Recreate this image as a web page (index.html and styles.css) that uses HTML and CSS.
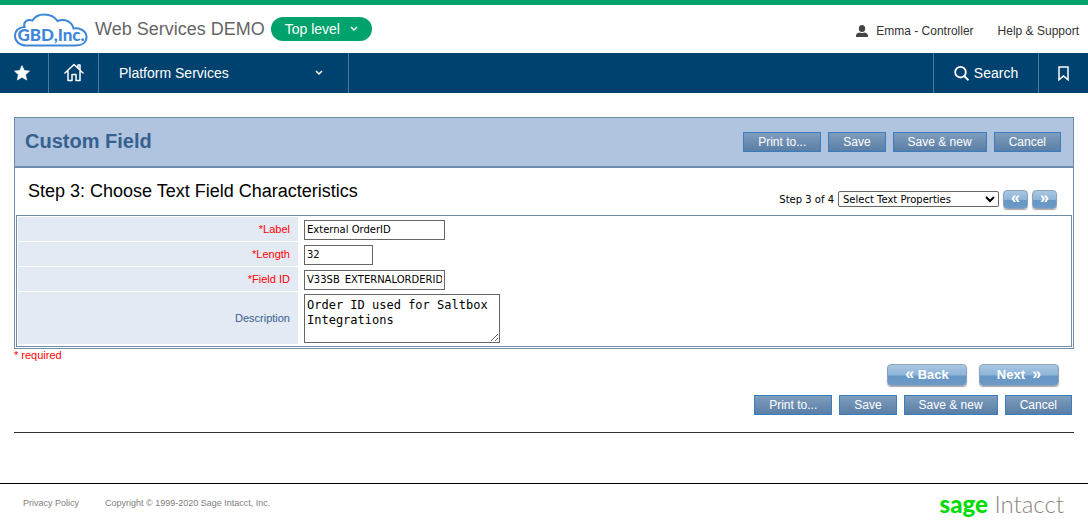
FILE: index.html
```
<!DOCTYPE html>
<html lang="en">
<head>
    <meta charset="UTF-8">
    <meta name="viewport" content="width=device-width, initial-scale=1.0">
    <title>Custom Field</title>
    <link rel="stylesheet" href="styles.css">
</head>
<body>
    <header class="top">
        <svg class="logo" width="76" height="36" viewBox="0 0 76 36" role="img" aria-label="GBD,Inc.">
            <path d="M14 32.5C6 32.500 2 28 2 23C2 17.500 6 14 11.500 14C10 9 14 6 19.500 7.500C22 3.500 26 1.500 31 1.500C37 1.500 42 4 44.500 8C52 5 59 9 60.500 15.500C68 14.500 73.500 18.500 73.500 24C73.500 29.500 69 32.500 63 32.500Z" fill="#fff" stroke="#3e87d8" stroke-width="2"/>
            <text x="38" y="28" text-anchor="middle" class="logo-text">GBD,Inc.</text>
        </svg>
        <span class="company">Web Services DEMO</span>
        <button class="level">Top level
            <svg width="8" height="6" viewBox="0 0 8 6"><path d="M1 1l3 3 3-3" fill="none" stroke="#fff" stroke-width="1.500"/></svg>
        </button>
        <div class="user-links">
            <a href="#" class="user">
                <svg width="12" height="12" viewBox="0 0 12 12" fill="#444"><ellipse cx="6" cy="3.500" rx="3.200" ry="3.500"/><path d="M0 12V10.500Q0 8.500 2.500 7.800L4 7.400Q6 8.500 8 7.400L9.500 7.800Q12 8.500 12 10.500V12Z"/></svg>
                Emma - Controller
            </a>
            <a href="#">Help &amp; Support</a>
        </div>
    </header>

    <nav class="menu">
        <a href="#" class="menu-star" aria-label="Favorites">
            <svg width="16" height="16" viewBox="0 0 16 16"><path d="M8 .5l2.300 5 5.200.6-3.900 3.600 1.100 5.300L8 12.300 3.300 15l1.100-5.300L.5 6.100l5.200-.6z" fill="#fff" stroke="#fff" stroke-width=".6" stroke-linejoin="round"/></svg>
        </a>
        <a href="#" class="menu-home" aria-label="Home">
            <svg width="20" height="20" viewBox="0 0 20 20" fill="none" stroke="#fff" stroke-width="1.500" stroke-linejoin="round" stroke-linecap="round"><path d="M1 10L10 1.500l9 8.500M14 5V2H16V7M4 8.500V17.500H8V11.500h4v6h4V8.500"/></svg>
        </a>
        <button class="menu-module">Platform Services
            <svg width="8" height="6" viewBox="0 0 8 6"><path d="M1 1l3 3 3-3" fill="none" stroke="#fff" stroke-width="1.500"/></svg>
        </button>
        <button class="menu-search">
            <svg width="15" height="15" viewBox="0 0 15 15" fill="none" stroke="#fff" stroke-width="1.800"><circle cx="6.500" cy="6.200" r="5.300"/><path d="M10.200 10L14.500 14.300"/></svg>
            Search
        </button>
        <button class="menu-bookmark" aria-label="Bookmark">
            <svg width="11" height="15" viewBox="0 0 11 15"><path d="M1 1h9v12.800L5.500 10 1 13.800z" fill="none" stroke="#fff" stroke-width="1.500"/></svg>
        </button>
    </nav>

    <main>
        <form>
            <section class="panel">
                <div class="panel-title">
                    <h1>Custom Field</h1>
                    <div class="actions">
                        <button type="button">Print to...</button>
                        <button type="button">Save</button>
                        <button type="button">Save &amp; new</button>
                        <button type="button">Cancel</button>
                    </div>
                </div>
                <div class="step">
                    <h2>Step 3: Choose Text Field Characteristics</h2>
                    <div class="step-nav">
                        <label for="stepSelect">Step 3 of 4</label>
                        <select id="stepSelect">
                            <option>Select Text Properties</option>
                        </select>
                        <button type="button" class="glossy" aria-label="Previous step">«</button>
                        <button type="button" class="glossy" aria-label="Next step">»</button>
                    </div>
                </div>
                <div class="fields">
                    <table>
                        <tr>
                            <th class="req"><label for="label">*Label</label></th>
                            <td><input type="text" id="label" value="External OrderID"></td>
                        </tr>
                        <tr>
                            <th class="req"><label for="length">*Length</label></th>
                            <td><input type="text" id="length" class="short" value="32"></td>
                        </tr>
                        <tr>
                            <th class="req"><label for="fieldId">*Field ID</label></th>
                            <td><input type="text" id="fieldId" value="V33SB_EXTERNALORDERID"></td>
                        </tr>
                        <tr>
                            <th><label for="description">Description</label></th>
                            <td><textarea id="description">Order ID used for Saltbox Integrations</textarea></td>
                        </tr>
                    </table>
                </div>
            </section>
            <p class="required">* required</p>
            <div class="wizard">
                <button type="button" class="glossy"><span class="arrow">«</span> Back</button>
                <button type="button" class="glossy">Next&nbsp; <span class="arrow">»</span></button>
            </div>
            <div class="actions actions-bottom">
                <button type="button">Print to...</button>
                <button type="button">Save</button>
                <button type="button">Save &amp; new</button>
                <button type="button">Cancel</button>
            </div>
        </form>
    </main>

    <footer>
        <a href="#">Privacy Policy</a>
        <span>Copyright © 1999-2020 Sage Intacct, Inc.</span>
        <div class="sage"><b>sage</b> Intacct</div>
    </footer>
</body>
</html>
```

FILE: styles.css
```
* {
    box-sizing: border-box;
}
body {
    margin: 0;
    background-color: #fff;
    font-family: "Liberation Sans", Arial, sans-serif;
    font-size: 12px;
}
button {
    font-family: inherit;
    cursor: pointer;
}
a {
    color: inherit;
    text-decoration: none;
}
h1, h2, p {
    margin: 0;
}

/* header */
.top {
    display: flex;
    align-items: center;
    height: 53px;
    padding: 4px 9px 0 13px;
    border-top: 5px solid #00a36c;
}
.logo-text {
    font-family: Lato, sans-serif;
    font-size: 17px;
    font-weight: 900;
    fill: #3e87d8;
}
.company {
    margin-left: 6px;
    padding-bottom: 4px;
    font-size: 18px;
    color: #666;
}
.level {
    display: flex;
    align-items: center;
    gap: 10px;
    height: 24px;
    margin: 0 0 4px 6px;
    padding: 0 14px;
    border: none;
    border-radius: 12px;
    background-color: #00a36c;
    color: #fff;
    font-size: 14px;
}
.user-links {
    display: flex;
    gap: 24px;
    margin-left: auto;
    font-size: 12px;
    color: #333;
}
.user {
    display: flex;
    align-items: center;
    gap: 8px;
}

/* main menu */
.menu {
    display: flex;
    height: 40px;
    background-color: #00426f;
}
.menu a, .menu button {
    display: flex;
    align-items: center;
    justify-content: center;
    padding: 0;
    border: 0 solid #4d7b9a;
    background: none;
    color: #fff;
    font-size: 14px;
}
.menu .menu-star {
    width: 49px;
    padding-right: 4px;
    border-right-width: 1px;
}
.menu .menu-home {
    width: 50px;
    border-right-width: 1px;
}
.menu .menu-module {
    width: 250px;
    padding: 0 25px 0 20px;
    border-right-width: 1px;
    justify-content: space-between;
}
.menu .menu-search {
    gap: 5px;
    width: 105px;
    margin-left: auto;
    border-left-width: 1px;
}
.menu .menu-bookmark {
    width: 50px;
    border-left-width: 1px;
}

/* form panel */
main {
    margin: 24px 14px 0;
    padding-bottom: 17px;
    border-bottom: 1px solid #333;
}
.panel {
    border: 1px solid #6f8caa;
}
.panel-title {
    display: flex;
    align-items: center;
    justify-content: space-between;
    height: 50px;
    padding: 0 12px 0 10px;
    border-bottom: 2px solid #6f8caa;
    background-color: #b0c4e0;
}
.panel-title h1 {
    padding-bottom: 2px;
    font-size: 20px;
    color: #36618f;
}
.actions {
    display: flex;
    gap: 7px;
}
.actions button {
    height: 20px;
    padding: 0 14px;
    border: 1px solid #3c7dc0;
    background: linear-gradient(#7f9dbd, #5a7ea6);
    color: #fff;
    font-size: 12px;
}
.step {
    display: flex;
    justify-content: space-between;
    height: 47px;
    padding: 13px 16px 0 13px;
}
.step h2 {
    font-size: 18px;
    font-weight: normal;
}
.step-nav {
    display: flex;
    align-items: center;
    gap: 4px;
    height: 36px;
    font-family: "DejaVu Sans", Verdana, sans-serif;
    font-size: 10px;
}
.step-nav select {
    width: 161px;
    height: 16px;
    padding: 0;
    border: 1px solid #666;
    border-radius: 2px;
    background-color: #fff;
    color: #000;
    font-family: inherit;
    font-size: 10px;
}
.glossy {
    padding: 0;
    border: 1px solid #8fa3b8;
    border-radius: 4px;
    background: linear-gradient(#a9c7e2, #8db4d8 50%, #6596c5 55%, #6d9ac6);
    box-shadow: 0 1px 1px #aaa;
    color: #fff;
    font-family: "Liberation Sans", Arial, sans-serif;
    font-size: 13px;
    font-weight: bold;
}
.step-nav .glossy {
    width: 25px;
    height: 19px;
    padding-bottom: 4px;
    font-size: 16px;
    line-height: 13px;
}
.fields {
    margin: 0 1px 1px;
    padding: 1px;
    border: 1px solid #6f8caa;
}
.fields table {
    width: 100%;
    border-spacing: 0;
}
.fields th {
    width: 280px;
    padding: 0 8px;
    border-bottom: 1px solid #fff;
    background-color: #e4eaf4;
    color: #36618f;
    font-size: 11px;
    font-weight: normal;
    text-align: right;
}
.fields th.req {
    color: #f00;
}
.fields td {
    height: 25px;
    padding: 2px 6px;
}
.fields input, .fields textarea {
    display: block;
    border: 1px solid #666;
    border-radius: 0;
    color: #000;
}
.fields input {
    width: 141px;
    height: 20px;
    padding: 1px 2px;
    font-family: "DejaVu Sans", Verdana, sans-serif;
    font-size: 10px;
}
.fields input.short {
    width: 69px;
}
.fields textarea {
    width: 196px;
    height: 49px;
    padding: 3px 2px 2px;
    font-family: "DejaVu Sans Mono", monospace;
    font-size: 12px;
    line-height: 15px;
}
.required {
    font-size: 11px;
    line-height: 13px;
    color: #f00;
}
.wizard {
    display: flex;
    justify-content: flex-end;
    gap: 12px;
    margin: 2px 15px 9px;
}
.wizard .glossy {
    width: 80px;
    height: 22px;
    padding-bottom: 2px;
}
.arrow {
    font-size: 16px;
    line-height: 13px;
}
.actions-bottom {
    justify-content: flex-end;
    margin-right: 2px;
}

/* footer */
footer {
    display: flex;
    align-items: center;
    gap: 26px;
    height: 39px;
    margin-top: 50px;
    padding: 0 24px 0 23px;
    border-top: 1px solid #000;
    font-size: 9px;
    color: #808080;
}
.sage {
    margin-left: auto;
    font-family: Lato, sans-serif;
    font-size: 24px;
    font-weight: 300;
    color: #8c8580;
}
.sage b {
    font-weight: 900;
    color: #00dc06;
}
```
